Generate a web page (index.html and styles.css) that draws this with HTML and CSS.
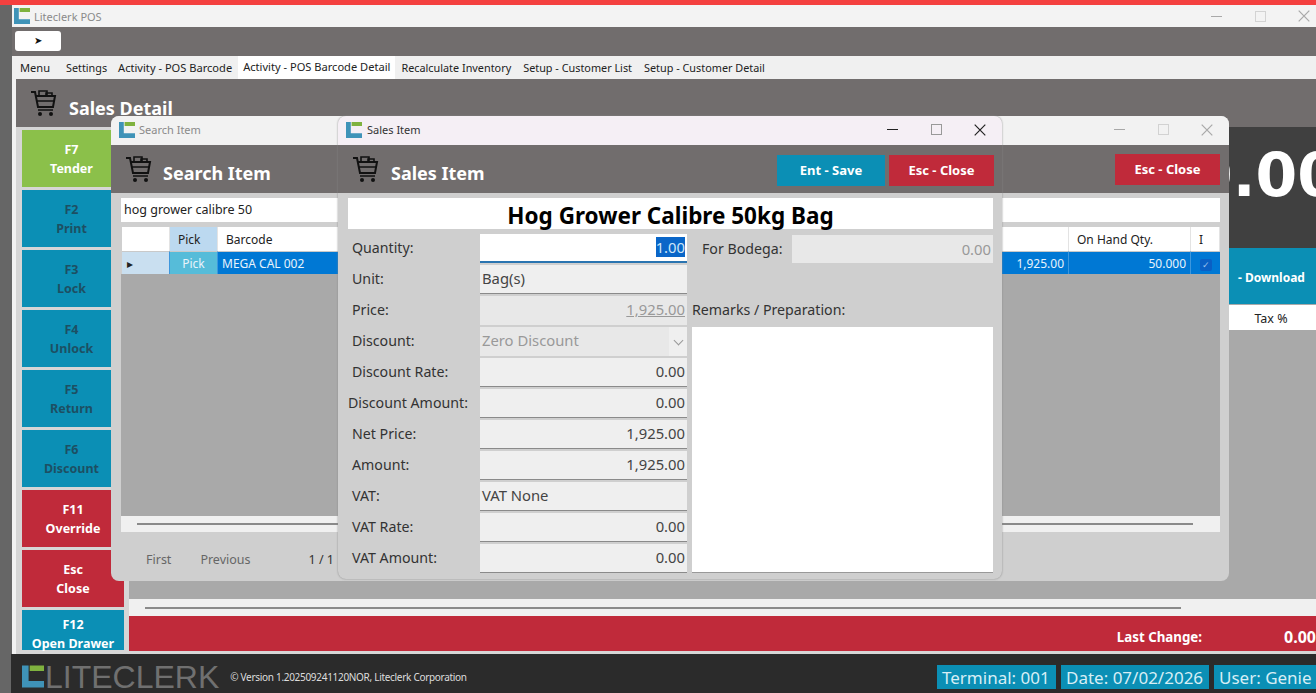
FILE: index.html
```html
<!DOCTYPE html>
<html>
<head>
    <title>Liteclerk POS</title>
    <link rel="stylesheet" href="styles.css">
</head>
<body>
<svg class="defs" width="0" height="0">
    <symbol id="logo" viewBox="0 0 20 20">
        <path fill="#3f93b8" d="M0 0h6v14h14v6H0z"/>
        <path fill="#7fb23f" d="M7 0h13v5H7z"/>
    </symbol>
    <symbol id="cart" viewBox="0 0 28 28">
        <path fill="none" stroke="#111" stroke-width="2" d="M1 3h4l3 15h15l2-11H6"/>
        <path fill="none" stroke="#111" stroke-width="1.6" d="M9 7V2h8v5M16 7V4h6v3M7 12h17M8 21h15"/>
        <circle cx="10" cy="25" r="2" fill="#111"/>
        <circle cx="21" cy="25" r="2" fill="#111"/>
    </symbol>
    <symbol id="close-x" viewBox="0 0 12 12">
        <path fill="none" stroke="currentColor" stroke-width="1.2" d="M.7.7l10.6 10.6M11.3.7L.7 11.3"/>
    </symbol>
</svg>

<div class="topline"></div>
<div class="app">
    <div class="titlebar">
        <div class="title-left">
            <svg class="logo"><use href="#logo"/></svg>
            <span class="app-name">Liteclerk POS</span>
        </div>
        <div class="win-controls faint app-controls">
            <span class="wc-min"></span><span class="wc-max"></span><span class="wc-close"><svg><use href="#close-x"/></svg></span>
        </div>
    </div>
    <div class="toolbar"><button class="play-btn">➤</button></div>
    <div class="tabs">
        <span class="tab tab-menu">Menu</span>
        <span class="tab tab-settings">Settings</span>
        <span class="tab">Activity - POS Barcode</span>
        <span class="tab active">Activity - POS Barcode Detail</span>
        <span class="tab tab-small">Recalculate Inventory</span>
        <span class="tab tab-small">Setup - Customer List</span>
        <span class="tab tab-small">Setup - Customer Detail</span>
    </div>
    <div class="page">
        <div class="page-head">
            <svg class="cart"><use href="#cart"/></svg>
            <span class="head-title">Sales Detail</span>
        </div>
        <div class="page-body">
            <div class="sidebar">
                <div class="fkey green"><span>F7</span><span>Tender</span></div>
                <div class="fkey teal dim"><span>F2</span><span>Print</span></div>
                <div class="fkey teal dim"><span>F3</span><span>Lock</span></div>
                <div class="fkey teal dim"><span>F4</span><span>Unlock</span></div>
                <div class="fkey teal dim"><span>F5</span><span>Return</span></div>
                <div class="fkey teal dim"><span>F6</span><span>Discount</span></div>
                <div class="fkey red"><span>F11</span><span>Override</span></div>
                <div class="fkey red"><span>Esc</span><span>Close</span></div>
                <div class="fkey teal short"><span>F12</span><span>Open Drawer</span></div>
            </div>
            <div class="main">
                <div class="main-top">
                    <div class="main-grid"></div>
                    <div class="right-panel">
                        <div class="total">0.00</div>
                        <div class="download">- Download</div>
                        <div class="tax">Tax %</div>
                    </div>
                </div>
                <div class="hscroll main-scroll"><span class="thumb"></span></div>
                <div class="change-bar">
                    <span class="change-label">Last Change:</span>
                    <span class="change-value">0.00</span>
                </div>
            </div>
        </div>
    </div>
</div>
<div class="footer">
    <svg class="foot-logo"><use href="#logo"/></svg>
    <span class="brand">LITECLERK</span>
    <span class="version">© Version 1.202509241120NOR, Liteclerk Corporation</span>
    <div class="chips">
        <span class="chip chip-terminal">Terminal: 001</span>
        <span class="chip chip-date">Date: 07/02/2026</span>
        <span class="chip chip-user">User: Genie</span>
    </div>
</div>

<!-- floating windows -->
<div class="window search-win">
    <div class="win-title">
        <div class="title-left">
            <svg class="logo"><use href="#logo"/></svg>
            <span class="app-name">Search Item</span>
        </div>
        <div class="win-controls faint">
            <span class="wc-min"></span><span class="wc-max"></span><span class="wc-close"><svg><use href="#close-x"/></svg></span>
        </div>
    </div>
    <div class="win-head">
        <div class="win-head-left">
            <svg class="cart"><use href="#cart"/></svg>
            <span class="head-title">Search Item</span>
        </div>
        <div class="win-actions"><span class="action red">Esc - Close</span></div>
    </div>
    <div class="search-body">
        <div class="search-input">hog grower calibre 50</div>
        <div class="grid-table">
            <div class="gh"></div>
            <div class="gh gh-pick">Pick</div>
            <div class="gh">Barcode</div>
            <div class="gh"></div>
            <div class="gh">On Hand Qty.</div>
            <div class="gh">I</div>
            <div class="gc gc-arrow">▸</div>
            <div class="gc gc-pick">Pick</div>
            <div class="gc">MEGA CAL 002</div>
            <div class="gc num">1,925.00</div>
            <div class="gc num">50.000</div>
            <div class="gc gc-check"><span class="check">✓</span></div>
        </div>
        <div class="grid-empty"></div>
        <div class="hscroll search-scroll"><span class="thumb"></span></div>
        <div class="pager">
            <span class="pager-first">First</span>
            <span class="pager-prev">Previous</span>
            <span class="pager-count">1 / 1</span>
        </div>
    </div>
</div>

<div class="window sales-win">
    <div class="win-title sales-title">
        <div class="title-left">
            <svg class="logo"><use href="#logo"/></svg>
            <span class="app-name dark">Sales Item</span>
        </div>
        <div class="win-controls">
            <span class="wc-min"></span><span class="wc-max"></span><span class="wc-close"><svg><use href="#close-x"/></svg></span>
        </div>
    </div>
    <div class="win-head">
        <div class="win-head-left">
            <svg class="cart"><use href="#cart"/></svg>
            <span class="head-title">Sales Item</span>
        </div>
        <div class="win-actions">
            <span class="action teal">Ent - Save</span>
            <span class="action red">Esc - Close</span>
        </div>
    </div>
    <div class="sales-body">
        <div class="item-name">Hog Grower Calibre 50kg Bag</div>
        <div class="sales-form">
            <div class="form-left">
                <label class="f-label">Quantity:</label>
                <div class="f-input focus num"><span class="selected">1.00</span></div>
                <label class="f-label">Unit:</label>
                <div class="f-input">Bag(s)</div>
                <label class="f-label">Price:</label>
                <div class="f-input off num"><u>1,925.00</u></div>
                <label class="f-label">Discount:</label>
                <div class="f-input off select">Zero Discount<span class="chev"></span></div>
                <label class="f-label">Discount Rate:</label>
                <div class="f-input num">0.00</div>
                <label class="f-label tight">Discount Amount:</label>
                <div class="f-input num">0.00</div>
                <label class="f-label">Net Price:</label>
                <div class="f-input num">1,925.00</div>
                <label class="f-label">Amount:</label>
                <div class="f-input num">1,925.00</div>
                <label class="f-label">VAT:</label>
                <div class="f-input">VAT None</div>
                <label class="f-label">VAT Rate:</label>
                <div class="f-input num">0.00</div>
                <label class="f-label">VAT Amount:</label>
                <div class="f-input num">0.00</div>
            </div>
            <div class="form-right">
                <div class="bodega">
                    <label class="bodega-label">For Bodega:</label>
                    <div class="f-input off num bodega-input">0.00</div>
                </div>
                <div class="remarks-label">Remarks / Preparation:</div>
                <div class="remarks"></div>
            </div>
        </div>
    </div>
</div>
</body>
</html>
```

FILE: styles.css
```css
* {
    box-sizing: border-box;
}

html, body {
    margin: 0;
    height: 693px;
    overflow: hidden;
}

body {
    position: relative;
    display: flex;
    flex-direction: column;
    font-family: "Noto Sans", "Open Sans", sans-serif;
    font-size: 14px;
    color: #222;
    background-color: #666;
}

.defs {
    position: absolute;
}

.topline {
    height: 5px;
    flex: none;
    background-color: #f4403f;
}

.app {
    height: 649px;
    flex: none;
    margin-left: 12px;
    display: flex;
    flex-direction: column;
    background-color: #f2f2f2;
}

.titlebar {
    height: 22px;
    flex: none;
    display: flex;
    justify-content: space-between;
    align-items: center;
    padding-left: 2px;
    background-color: #f3f3f3;
}

.title-left {
    display: flex;
    align-items: center;
}

.logo {
    width: 16px;
    height: 16px;
    margin-right: 4px;
}

.app-name {
    font-size: 11px;
    color: #8a8a8a;
}

.app-name.dark {
    color: #333;
}

.win-controls {
    display: flex;
    align-items: center;
    color: #222;
}

.win-controls.faint {
    opacity: 0.35;
}

.app-controls {
    margin-right: -10px;
}

.win-controls span {
    display: flex;
    justify-content: center;
    align-items: center;
    width: 44px;
}

.wc-min::before {
    content: "";
    display: block;
    width: 11px;
    height: 1px;
    background-color: #222;
}

.wc-max::before {
    content: "";
    display: block;
    width: 9px;
    height: 9px;
    border: 1px solid #999;
}

.wc-close svg {
    display: block;
    width: 12px;
    height: 12px;
}

.toolbar {
    height: 29px;
    flex: none;
    padding: 4px 3px;
    background-color: #716d6d;
}

.play-btn {
    display: block;
    width: 46px;
    height: 20px;
    padding: 0;
    border: none;
    border-radius: 3px;
    font-size: 10px;
    line-height: 20px;
    color: #111;
    background-color: #fff;
}

.tabs {
    height: 23px;
    flex: none;
    display: flex;
    align-items: stretch;
    padding-left: 4px;
    font-size: 11.1px;
    line-height: 24px;
    background-color: #f0f0f0;
}

.tab {
    padding: 0 6px;
    white-space: nowrap;
    color: #222;
}

.tab-menu {
    width: 48px;
    padding: 0 4px;
}

.tab-settings {
    padding: 0 5px 0 2px;
    font-size: 10.8px;
}

.tab-small {
    font-size: 10.85px;
}

.tab.active {
    padding: 0 5px;
    line-height: 22px;
    background-color: #fff;
}

.page {
    flex: 1;
    min-height: 0;
    display: flex;
    flex-direction: column;
    margin-left: 4px;
}

.page-head {
    height: 48px;
    flex: none;
    display: flex;
    align-items: center;
    padding-left: 14px;
    background-color: #716d6d;
}

.cart {
    width: 28px;
    height: 28px;
    margin-right: 11px;
}

.head-title {
    margin-top: 10px;
    font-size: 18px;
    font-weight: 700;
    color: #fff;
}

.page-body {
    flex: 1;
    min-height: 0;
    display: flex;
    padding-bottom: 3px;
    background-color: #d6d6d6;
}

.sidebar {
    width: 113px;
    flex: none;
    display: flex;
    flex-direction: column;
    gap: 3px;
    padding: 3px 5px 0 6px;
    overflow: hidden;
}

.fkey {
    height: 57px;
    flex: none;
    display: flex;
    flex-direction: column;
    justify-content: center;
    font-size: 12.5px;
    font-weight: 700;
    line-height: 19px;
    text-align: center;
    color: #fff;
}

.fkey.dim {
    padding-right: 3px;
    color: #1d4f63;
}

.fkey.green {
    padding-right: 3px;
}

.fkey.short {
    height: 40px;
    justify-content: flex-start;
    padding-top: 5px;
}

.green {
    background-color: #8bc04a;
}

.teal {
    background-color: #0b8fb5;
}

.red {
    background-color: #c02a3a;
}

.main {
    flex: 1;
    min-width: 0;
    display: flex;
    flex-direction: column;
}

.main-top {
    flex: 1;
    min-height: 0;
    display: flex;
    background-color: #a9a9a9;
}

.main-grid {
    flex: 1;
}

.right-panel {
    width: 87px;
    flex: none;
    display: flex;
    flex-direction: column;
}

.total {
    height: 121px;
    overflow: hidden;
    padding-top: 13px;
    text-indent: -38px;
    font-family: "DejaVu Sans", sans-serif;
    font-size: 60px;
    font-weight: 700;
    line-height: 70px;
    white-space: nowrap;
    color: #fff;
    background-color: #404040;
}

.download {
    height: 56px;
    padding: 21px 0 0 9px;
    font-size: 12px;
    font-weight: 700;
    white-space: nowrap;
    color: #fff;
    background-color: #0b8fb5;
}

.tax {
    height: 25px;
    margin-top: 1px;
    padding-right: 3px;
    font-size: 12.5px;
    line-height: 27px;
    text-align: center;
    background-color: #fff;
}

.hscroll {
    flex: none;
    display: flex;
    align-items: center;
    background-color: #f0f0f0;
}

.thumb {
    display: block;
    height: 2px;
    background-color: #8a8a8a;
}

.main-scroll {
    height: 17px;
    padding-left: 16px;
}

.main-scroll .thumb {
    width: 1036px;
}

.change-bar {
    height: 35px;
    flex: none;
    display: flex;
    justify-content: flex-end;
    align-items: center;
    padding-top: 6px;
    font-weight: 700;
    color: #fff;
    background-color: #c02a3a;
}

.change-label {
    margin-right: 82px;
    font-size: 13.3px;
}

.change-value {
    width: 32px;
    font-size: 16px;
    white-space: nowrap;
}

.footer {
    flex: 1;
    margin-left: 11px;
    display: flex;
    align-items: center;
    padding-top: 6px;
    background-color: #2b2b2b;
}

.foot-logo {
    width: 22px;
    height: 23px;
    margin: 0 1px 0 11px;
}

.brand {
    font-family: "Liberation Sans", sans-serif;
    font-size: 32px;
    line-height: 28px;
    color: #707070;
}

.version {
    margin-left: 11px;
    font-size: 10px;
    letter-spacing: -0.3px;
    color: #ddd;
}

.chips {
    margin-left: auto;
    display: flex;
    gap: 5px;
}

.chip {
    height: 24px;
    padding: 0 5px;
    font-size: 17px;
    line-height: 25px;
    white-space: nowrap;
    overflow: hidden;
    color: #d7eef5;
    background-color: #0b8fb5;
}

.chip-terminal {
    width: 119px;
}

.chip-date {
    width: 148px;
}

.chip-user {
    width: 102px;
}

.window {
    position: absolute;
    display: flex;
    flex-direction: column;
    overflow: hidden;
    border-radius: 8px;
    background-color: #cfcfcf;
}

.search-win {
    left: 111px;
    top: 116px;
    width: 1118px;
    height: 465px;
}

.sales-win {
    left: 338px;
    top: 116px;
    width: 664px;
    height: 463px;
    box-shadow: 0 0 2px #888;
}

.win-title {
    height: 29px;
    flex: none;
    display: flex;
    justify-content: space-between;
    align-items: center;
    padding: 0 0 2px 8px;
    background-color: #f2f2f2;
}

.sales-title {
    background-color: #f5eff5;
}

.sales-title .logo {
    margin-right: 5px;
}

.win-head {
    height: 48px;
    flex: none;
    display: flex;
    justify-content: space-between;
    align-items: center;
    padding: 0 9px 0 14px;
    background-color: #716d6d;
}

.win-head-left {
    display: flex;
    align-items: center;
}

.win-head .head-title {
    margin-top: 8px;
}

.win-head .cart {
    margin-right: 10px;
}

.sales-win .win-head {
    padding-right: 8px;
}

.sales-win .win-head .head-title {
    margin: 8px 0 0 1px;
}

.sales-win .win-actions {
    margin-top: 2px;
}

.win-actions {
    display: flex;
    gap: 4px;
}

.action {
    width: 105px;
    height: 31px;
    font-size: 13px;
    font-weight: 700;
    line-height: 31px;
    text-align: center;
    color: #fff;
}

.action.teal {
    width: 108px;
}

.search-body {
    flex: 1;
    display: flex;
    flex-direction: column;
    padding-top: 5px;
}

.search-input {
    height: 24px;
    flex: none;
    margin: 0 9px 0 10px;
    padding-left: 3px;
    font-size: 12.5px;
    line-height: 24px;
    color: #222;
    background-color: #fff;
}

.grid-table {
    flex: none;
    display: grid;
    grid-template-columns: 48px 48px 1fr 120px 122px 29px;
    grid-template-rows: 24px 23px;
    margin: 5px 9px 0 11px;
    font-size: 12px;
    line-height: 25px;
    background-color: #fff;
}

.gh {
    padding-left: 8px;
    border-right: 1px solid #e3e3e3;
    white-space: nowrap;
    background-color: #fff;
}

.gh-pick {
    background-color: #bcd9f0;
}

.gc {
    padding: 0 4px;
    border-right: 1px solid #3d97dd;
    border-top: 1px solid #c9c9c9;
    line-height: 23px;
    white-space: nowrap;
    color: #e8f3fb;
    background-color: #0078d4;
}

.gc.num {
    text-align: right;
}

.gc-arrow {
    padding-left: 5px;
    font-size: 12px;
    color: #222;
    background-color: #c9dff0;
}

.gc-pick {
    text-align: center;
    background-color: #56bcd9;
}

.gc-check {
    text-align: center;
    border-right: none;
}

.check {
    display: inline-block;
    width: 12px;
    height: 12px;
    border-radius: 2px;
    font-size: 9px;
    line-height: 12px;
    color: #9cc2ec;
    background-color: #0a5fc4;
}

.grid-empty {
    flex: 1;
    margin: 0 9px 0 10px;
    background-color: #a9a9a9;
}

.search-scroll {
    height: 16px;
    margin: 0 9px 0 10px;
    padding-left: 16px;
}

.search-scroll .thumb {
    width: 1056px;
}

.pager {
    height: 49px;
    flex: none;
    display: flex;
    align-items: center;
    padding-top: 5px;
    font-size: 12.5px;
    color: #666;
}

.pager-first {
    margin-left: 35px;
}

.pager-prev {
    margin-left: 29px;
}

.pager-count {
    margin-left: 58px;
    color: #333;
}

.sales-body {
    flex: 1;
    display: flex;
    flex-direction: column;
    padding: 5px 9px 8px 10px;
}

.item-name {
    height: 31px;
    flex: none;
    font-size: 22.5px;
    font-weight: 700;
    line-height: 35px;
    text-align: center;
    white-space: nowrap;
    color: #000;
    background-color: #fff;
}

.sales-form {
    flex: 1;
    min-height: 0;
    display: flex;
    margin-top: 5px;
}

.form-left {
    width: 339px;
    flex: none;
    display: grid;
    grid-template-columns: 132px 207px;
    grid-auto-rows: 29px;
    row-gap: 2px;
}

.f-label {
    padding-left: 4px;
    font-size: 14.2px;
    line-height: 27px;
    white-space: nowrap;
    color: #333;
}

.f-label.tight {
    padding-left: 0;
}

.f-input {
    position: relative;
    padding: 0 2px;
    border-bottom: 1px solid #8a8a8a;
    font-size: 14.8px;
    line-height: 27px;
    white-space: nowrap;
    color: #444;
    background-color: #efefef;
}

.f-input.num {
    text-align: right;
}

.f-input.focus {
    border-bottom: 2px solid #2a74b0;
    background-color: #fff;
}

.f-input.off {
    border-bottom: none;
    color: #999;
    background-color: #e8e8e8;
}

.selected {
    color: #cfe6f8;
    background-color: #0a66c8;
}

/* dropdown arrow on the disabled select */
.chev {
    position: absolute;
    right: 0;
    top: 0;
    width: 18px;
    height: 100%;
    background-color: #efefef;
}

.chev::after {
    content: "";
    position: absolute;
    left: 6px;
    top: 10px;
    width: 6px;
    height: 6px;
    border-right: 1px solid #999;
    border-bottom: 1px solid #999;
    transform: rotate(45deg);
}

.form-right {
    flex: 1;
    min-width: 0;
    display: flex;
    flex-direction: column;
    margin-left: 5px;
}

.bodega {
    height: 29px;
    flex: none;
    display: flex;
    margin-top: 1px;
}

.bodega-label {
    width: 100px;
    padding-left: 10px;
    font-size: 14.2px;
    line-height: 28px;
    white-space: nowrap;
    color: #333;
}

.bodega-input {
    flex: 1;
    height: 28px;
    line-height: 28px;
}

.remarks-label {
    height: 31px;
    flex: none;
    margin-top: 32px;
    font-size: 14.2px;
    line-height: 27px;
    white-space: nowrap;
    color: #333;
}

.remarks {
    flex: 1;
    border-bottom: 1px solid #999;
    background-color: #fff;
}
```
